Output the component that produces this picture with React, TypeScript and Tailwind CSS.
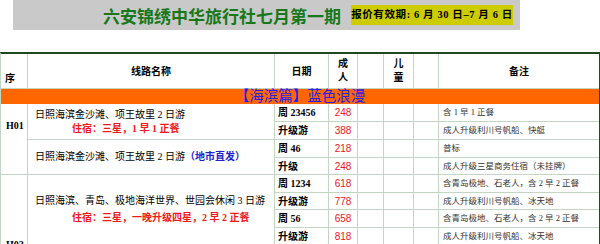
const line = "border-r border-b border-[#c3d6c3]";
const cjk = { fontFamily: '"Liberation Serif", "Noto Sans CJK SC", serif' };

type Row = { day: string; price: string; note: string };

const h01: Row[] = [
  { day: "周 23456", price: "248", note: "含 1 早 1 正餐" },
  { day: "升级游", price: "388", note: "成人升级利川号帆船、快艇" },
  { day: "周 46", price: "218", note: "普标" },
  { day: "升级", price: "248", note: "成人升级三星商务住宿（未挂牌）" },
];

const h02: Row[] = [
  { day: "周 1234", price: "618", note: "含青岛极地、石老人，含 2 早 2 正餐" },
  { day: "升级游", price: "778", note: "成人升级利川号帆船、冰天地" },
  { day: "周 56", price: "658", note: "含青岛极地、石老人，含 2 早 2 正餐" },
  { day: "升级游", price: "818", note: "成人升级利川号帆船、冰天地" },
  { day: "", price: "", note: "" },
  { day: "", price: "", note: "" },
  { day: "", price: "", note: "" },
  { day: "", price: "", note: "" },
];

const PriceRow = ({ r }: { r: Row }) => (
  <>
    <div className={`${line} flex items-center pl-[3px] text-[10px] font-bold text-black`}>{r.day}</div>
    <div className={`${line} flex items-center justify-center text-[10px] text-[#f0141e]`} style={{ fontFamily: '"Liberation Sans", sans-serif' }}>
      {r.price}
    </div>
    <div className={line} />
    <div className={line} />
    <div className={line} />
    <div className="border-b border-[#c3d6c3] flex items-center pl-[4px] text-[8.5px] text-[#333]">{r.note}</div>
  </>
);

export default function App() {
  return (
    <div className="h-[244px] w-[600px] overflow-hidden bg-white" style={cjk}>
      {/* title banner */}
      <div className="ml-[13px] flex h-[30px] w-[507px] items-center bg-[#c9c9c9] pl-[90px]">
        <div className="text-[17px] font-bold leading-none text-[#17781a]" style={{ fontFamily: '"Noto Sans CJK SC", sans-serif' }}>
          六安锦绣中华旅行社七月第一期
        </div>
        <div className="ml-[10px] flex h-[20px] w-[162px] items-center justify-center bg-[#cccc00] text-[10.5px] font-bold tracking-[0.6px] text-black">
          报价有效期: 6 月 30 日–7 月 6 日
        </div>
      </div>

      <div className="mt-[22px] grid grid-cols-[27px_247px_54px_29px_26px_30px_25px_1fr] grid-rows-[35px_15px_18px_18px_18px_17px_18px_17px_18px_17px_18px_17px_18px_17px] border-l border-t-2 border-r border-l-[#c3d6c3] border-t-[#1f4a1f] border-r-[#1f4a1f] text-black">
        {/* header */}
        <div className={`${line} flex items-end pb-[2px] pl-[4px] text-[10px] font-bold`}>序</div>
        <div className={`${line} flex items-center justify-center text-[10px] font-bold`}>线路名称</div>
        <div className={`${line} flex items-center justify-center text-[10px] font-bold`}>日期</div>
        <div className={`${line} flex flex-col items-center justify-center gap-[4px] text-[10px] font-bold leading-none`}>
          <span>成</span>
          <span>人</span>
        </div>
        <div className={line} />
        <div className={`${line} flex flex-col items-center justify-center gap-[4px] text-[10px] font-bold leading-none`}>
          <span>儿</span>
          <span>童</span>
        </div>
        <div className={line} />
        <div className="border-b border-[#c3d6c3] flex items-center justify-center text-[10px] font-bold">备注</div>

        {/* section band */}
        <div className="col-span-8 flex items-center justify-center bg-[#ff6600] text-[14.5px] leading-none text-[#2222ee]">
          【海滨篇】蓝色浪漫
        </div>

        {/* H01 */}
        <div className={`${line} row-span-4 pl-[5px] pt-[17px] text-[10px] font-bold leading-none`}>H01</div>
        <div className={`${line} row-span-2 flex flex-col justify-center gap-[4px] text-[10px] leading-none`}>
          <div className="pl-[7px]">日照海滨金沙滩、项王故里 2 日游</div>
          <div className="pl-[44px] font-bold text-[#f01818]">住宿：三星，1 早 1 正餐</div>
        </div>
        <PriceRow r={h01[0]} />
        <PriceRow r={h01[1]} />
        <div className={`${line} row-span-2 flex items-center pl-[7px] text-[10px] leading-none`}>
          日照海滨金沙滩、项王故里 2 日游<span className="font-bold text-[#2020cc]">（地市直发）</span>
        </div>
        <PriceRow r={h01[2]} />
        <PriceRow r={h01[3]} />

        {/* H02 */}
        <div className={`${line} row-span-8 flex items-center pl-[5px] text-[10px] font-bold leading-none`}>H02</div>
        <div className={`${line} row-span-4 flex flex-col justify-center gap-[7px] text-[10px] leading-none`}>
          <div className="pl-[7px]">日照海滨、青岛、极地海洋世界、世园会休闲 3 日游</div>
          <div className="pl-[44px] font-bold text-[#f01818]">住宿：三星，一晚升级四星，2 早 2 正餐</div>
        </div>
        <PriceRow r={h02[0]} />
        <PriceRow r={h02[1]} />
        <PriceRow r={h02[2]} />
        <PriceRow r={h02[3]} />
        <div className={`${line} row-span-4`} />
        <PriceRow r={h02[4]} />
        <PriceRow r={h02[5]} />
        <PriceRow r={h02[6]} />
        <PriceRow r={h02[7]} />
      </div>
    </div>
  );
}
